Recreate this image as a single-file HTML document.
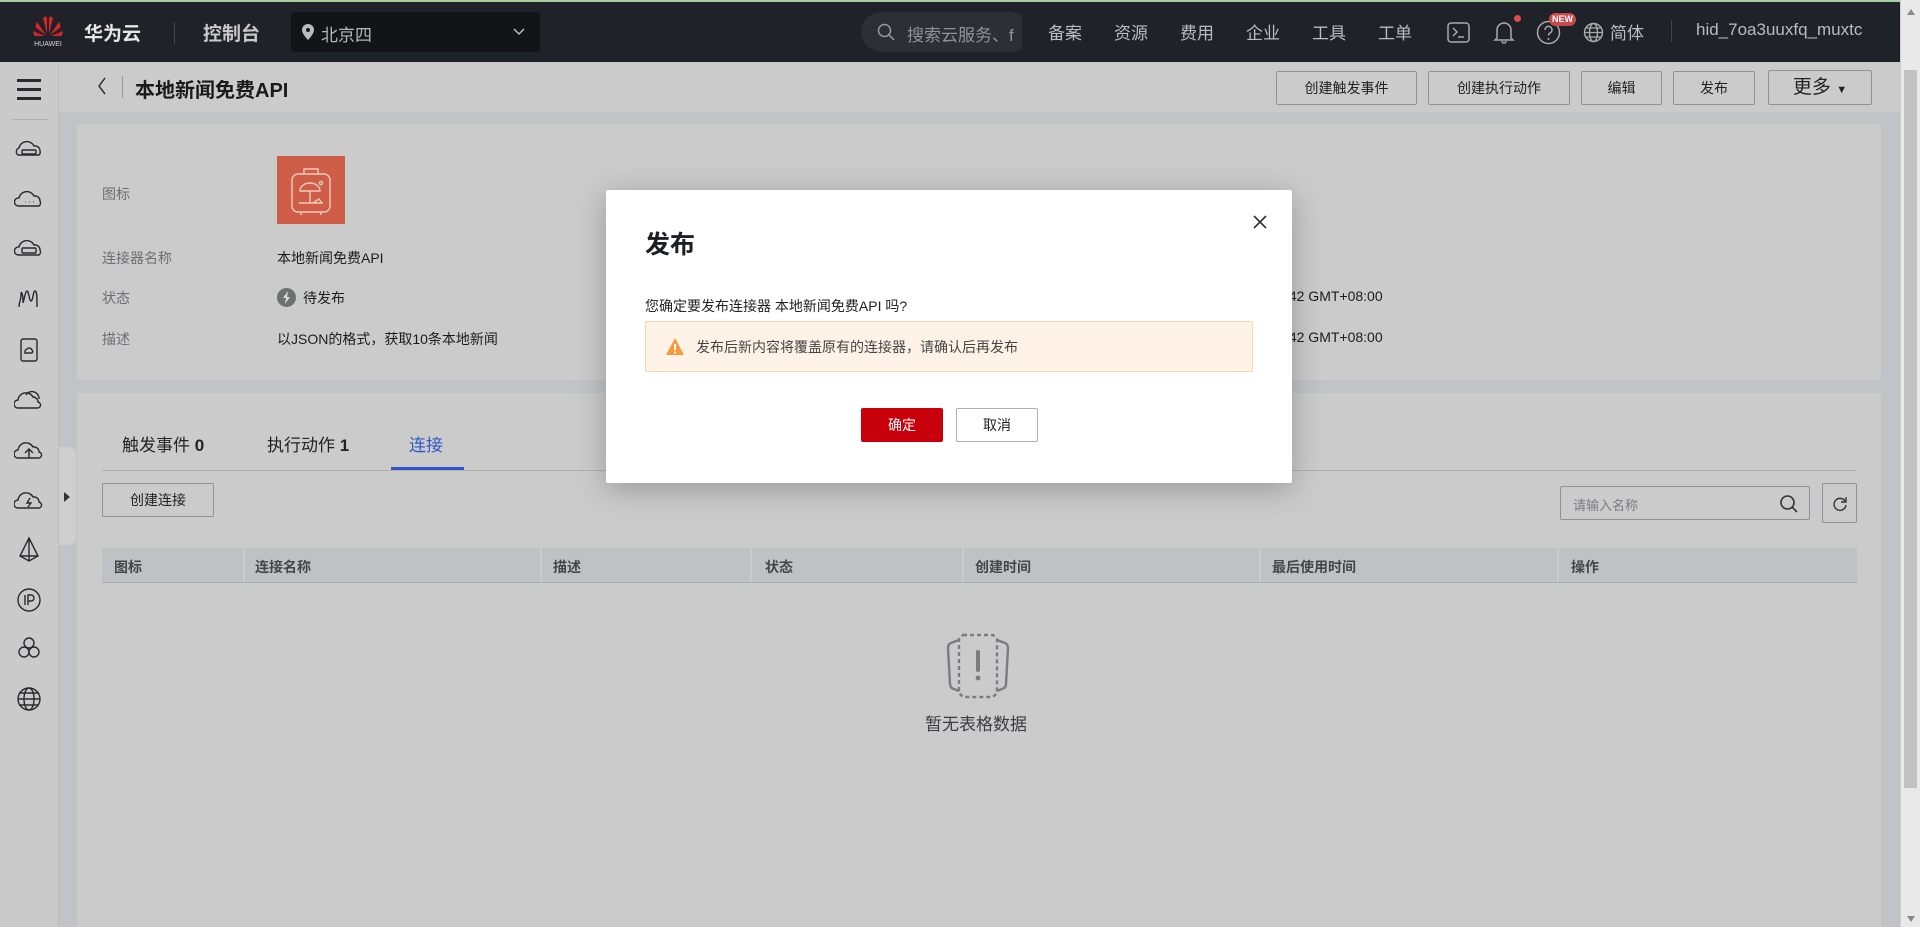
<!DOCTYPE html>
<html><head><meta charset="utf-8">
<style>
*{box-sizing:border-box;margin:0;padding:0}
body{width:1920px;height:927px;overflow:hidden;background:#c2c3c6;font-family:"Liberation Sans","Noto Sans CJK SC",sans-serif;font-size:14px;color:#1c1c1c;position:relative}
.abs{position:absolute}
.top{left:0;top:0;width:1900px;height:62px;background:#1f2229;border-top:2px solid #a9cf9f}
.nav{color:#b9bcc2;font-size:17px;top:17px}
.sb{left:1900px;top:0;width:20px;height:927px;background:#e9e9e9;border-left:1px solid #cfcfcf}
.side{left:0;top:62px;width:59px;height:865px;background:#cacaca;border-right:1px solid #bdbdbd}
.sub{left:59px;top:62px;width:1841px;height:50px;background:#cbcbcb}
.btn{border:1px solid #8f9196;border-radius:2px;background:#cbcbcb;text-align:center;font-size:14px;color:#222}
.card{background:#cbcbcb}
.lbl{color:#6d6e72;font-size:14px}
.th{top:548px;height:35px;background:#c0c1c5;border-bottom:1px solid #aeafb3}
.th span{position:absolute;top:9px;font-weight:bold;color:#44464c;font-size:14px}
.modal{left:606px;top:190px;width:686px;height:293px;background:#fff;border-radius:2px;box-shadow:0 6px 30px rgba(0,0,0,.25)}
</style></head><body>

<div class="abs top">
  <svg class="abs" style="left:30px;top:10px" width="36" height="36" viewBox="0 0 36 36">
    <g fill="#d5242b">
      <path d="M17 22 L13 6 Q16 3 17 6Z"/><path d="M19 22 L23 6 Q20 3 19 6Z"/>
      <path d="M16 23 L7 10 Q5 13 6 16Z"/><path d="M20 23 L29 10 Q31 13 30 16Z"/>
      <path d="M15 24 L3 19 Q3 22 5 24Z"/><path d="M21 24 L33 19 Q33 22 31 24Z"/>
    </g>
    <text x="18" y="34" font-size="7" fill="#d8d8d8" text-anchor="middle" font-family="Liberation Sans">HUAWEI</text>
  </svg>
  <div class="abs" style="left:84px;top:17px;color:#e6e6e6;font-size:19px;font-weight:bold">华为云</div>
  <div class="abs" style="left:174px;top:20px;width:1px;height:22px;background:#444"></div>
  <div class="abs" style="left:203px;top:17px;color:#c9c9c9;font-size:19px;font-weight:bold">控制台</div>
  <div class="abs" style="left:291px;top:10px;width:249px;height:40px;background:#131416;border-radius:4px">
    <svg class="abs" style="left:10px;top:11px" width="14" height="18" viewBox="0 0 14 18"><path d="M7 1a6 6 0 0 0-6 6c0 4 6 10 6 10s6-6 6-10a6 6 0 0 0-6-6z" fill="#bbb"/><circle cx="7" cy="7" r="2" fill="#131416"/></svg>
    <span class="abs" style="left:30px;top:9px;color:#b7b7b7;font-size:17px">北京四</span>
    <svg class="abs" style="left:222px;top:16px" width="12" height="8"><path d="M1 1l5 5 5-5" stroke="#bbb" stroke-width="1.5" fill="none"/></svg>
  </div>
  <div class="abs" style="left:861px;top:10px;width:170px;height:40px;background:#2c2f36;border-radius:20px">
    <svg class="abs" style="left:16px;top:11px" width="18" height="18"><circle cx="7.5" cy="7.5" r="6" stroke="#999" stroke-width="1.5" fill="none"/><path d="M12 12l5 5" stroke="#999" stroke-width="1.5"/></svg>
    <span class="abs" style="left:46px;top:9px;color:#8f9297;font-size:17px;white-space:nowrap">搜索云服务、f</span>
  </div>
  <div class="abs" style="left:1022px;top:10px;width:30px;height:40px;background:#1f2229"></div>
  <span class="abs nav" style="left:1048px">备案</span>
  <span class="abs nav" style="left:1114px">资源</span>
  <span class="abs nav" style="left:1180px">费用</span>
  <span class="abs nav" style="left:1246px">企业</span>
  <span class="abs nav" style="left:1312px">工具</span>
  <span class="abs nav" style="left:1378px">工单</span>
  <svg class="abs" style="left:1447px;top:20px" width="23" height="21"><rect x="1" y="1" width="21" height="19" rx="3" stroke="#aaa" stroke-width="1.5" fill="none"/><path d="M6 6l4 4-4 4M11 15h6" stroke="#aaa" stroke-width="1.5" fill="none"/></svg>
  <svg class="abs" style="left:1493px;top:18px" width="22" height="24"><path d="M4 18V10a7 7 0 0 1 14 0v8l2 2H2z" stroke="#aaa" stroke-width="1.5" fill="none"/><path d="M9 21a2 2 0 0 0 4 0" stroke="#aaa" stroke-width="1.5" fill="none"/></svg>
  <div class="abs" style="left:1514px;top:13px;width:7px;height:7px;border-radius:50%;background:#e0494a"></div>
  <svg class="abs" style="left:1536px;top:18px" width="25" height="25"><circle cx="12.5" cy="12.5" r="11" stroke="#aaa" stroke-width="1.5" fill="none"/><path d="M9 10a3.5 3.5 0 1 1 5 3c-1 .6-1.5 1.2-1.5 2.5" stroke="#aaa" stroke-width="1.5" fill="none"/><circle cx="12.5" cy="19" r="1" fill="#aaa"/></svg>
  <div class="abs" style="left:1549px;top:11px;width:27px;height:13px;border-radius:7px;background:#c9484a;color:#fff;font-size:9px;font-weight:bold;text-align:center;line-height:13px">NEW</div>
  <svg class="abs" style="left:1583px;top:20px" width="21" height="21"><circle cx="10.5" cy="10.5" r="9" stroke="#aaa" stroke-width="1.4" fill="none"/><ellipse cx="10.5" cy="10.5" rx="4" ry="9" stroke="#aaa" stroke-width="1.4" fill="none"/><path d="M1.5 10.5h18M3 6h15M3 15h15" stroke="#aaa" stroke-width="1.2"/></svg>
  <span class="abs nav" style="left:1610px">简体</span>
  <div class="abs" style="left:1671px;top:18px;width:1px;height:22px;background:#444"></div>
  <span class="abs nav" style="left:1696px;font-size:17px;top:18px">hid_7oa3uuxfq_muxtc</span>
</div>

<div class="abs sb">
  <svg class="abs" style="left:5px;top:8px" width="10" height="8"><path d="M5 1l4 6H1z" fill="#8a8a8a"/></svg>
  <div class="abs" style="left:3px;top:70px;width:13px;height:718px;background:#c1c1c1"></div>
  <svg class="abs" style="left:5px;top:915px" width="10" height="8"><path d="M5 7l4-6H1z" fill="#8a8a8a"/></svg>
</div>

<div class="abs side">
  <div class="abs" style="left:17px;top:17px;width:24px;height:3px;background:#2a2a2e;box-shadow:0 9px 0 #2a2a2e,0 18px 0 #2a2a2e"></div>
  <div class="abs" style="left:12px;top:57px;width:36px;height:1px;background:#b0b0b0"></div>
  <svg class="abs" style="left:14px;top:70px" width="30" height="650" viewBox="0 0 30 650" fill="none" stroke="#2a2a2e" stroke-width="1.4">
    <g transform="translate(0,4)"><path d="M4 19a4 4 0 0 1 1-7 8 8 0 0 1 15-2 5 5 0 0 1 6 5 4 4 0 0 1-1 4z"/><rect x="8" y="14" width="14" height="4" rx="1"/></g>
    <g transform="translate(0,54)"><path d="M4 20a4 4 0 0 1 1-8 8 8 0 0 1 15-2 5 5 0 0 1 6 5 4 4 0 0 1-1 5z"/><path d="M11 16h.5M15 16h.5M19 16h.5"/></g>
    <g transform="translate(0,103)"><path d="M4 20a4 4 0 0 1 1-8 8 8 0 0 1 15-2 5 5 0 0 1 6 5 4 4 0 0 1-1 5z"/><rect x="8" y="13" width="14" height="5" rx="1"/></g>
    <g transform="translate(0,153)"><path d="M5 22c0-6 2-6 2-12s2 0 2 6 2-10 4-10 2 10 4 10 2-10 4-10 2 6 2 16"/></g>
    <g transform="translate(0,203)"><rect x="7" y="4" width="16" height="22" rx="2"/><path d="M11 17a3 3 0 0 1 2-3 3 3 0 0 1 5 1 2 2 0 0 1 0 3h-7z"/></g>
    <g transform="translate(0,254)"><path d="M4 22a4 4 0 0 1 0-8 8 8 0 0 1 15-3 5 5 0 0 1 5 5 3 3 0 0 1-1 6z"/><path d="M12 9a7 7 0 0 1 13 4"/></g>
    <g transform="translate(0,304)"><path d="M4 22a4 4 0 0 1 0-8 8 8 0 0 1 15-3 5 5 0 0 1 6 5 3 3 0 0 1-1 6z"/><path d="M15 22v-8M11 17l4-4 4 4"/></g>
    <g transform="translate(0,354)"><path d="M4 22a4 4 0 0 1 0-8 8 8 0 0 1 15-3 5 5 0 0 1 6 5 3 3 0 0 1-1 6z"/><path d="M16 12l-3 5h4l-3 4"/></g>
    <g transform="translate(0,403)"><path d="M15 3L6 21l9 5 9-5zM15 3v23M6 21h18"/></g>
    <g transform="translate(0,453)"><circle cx="15" cy="15" r="11"/><path d="M11 10v10M14 20V10h3a3 3 0 0 1 0 6h-3"/></g>
    <g transform="translate(0,502)"><circle cx="15" cy="9" r="5"/><circle cx="10" cy="18" r="5"/><circle cx="20" cy="18" r="5"/></g>
    <g transform="translate(0,552)"><circle cx="15" cy="15" r="11"/><ellipse cx="15" cy="15" rx="5" ry="11"/><path d="M4 15h22M5 9h20M5 21h20"/></g>
  </svg>
</div>
<div class="abs" style="left:59px;top:447px;width:17px;height:98px;background:#cfcfcf;border-radius:0 8px 8px 0"></div>
<svg class="abs" style="left:63px;top:492px" width="8" height="10"><path d="M1 0l6 5-6 5z" fill="#333"/></svg>

<div class="abs sub">
  <svg class="abs" style="left:38px;top:15px" width="10" height="18"><path d="M8 1L2 9l6 8" stroke="#333" stroke-width="1.5" fill="none"/></svg>
  <div class="abs" style="left:63px;top:14px;width:1px;height:22px;background:#999"></div>
  <span class="abs" style="left:76px;top:12px;font-size:20px;font-weight:bold;color:#1a1a1a">本地新闻免费API</span>
  <div class="abs btn" style="left:1217px;top:9px;width:141px;height:34px;line-height:32px">创建触发事件</div>
  <div class="abs btn" style="left:1369px;top:9px;width:142px;height:34px;line-height:32px">创建执行动作</div>
  <div class="abs btn" style="left:1522px;top:9px;width:81px;height:34px;line-height:32px">编辑</div>
  <div class="abs btn" style="left:1614px;top:9px;width:82px;height:34px;line-height:32px">发布</div>
  <div class="abs btn" style="left:1709px;top:8px;width:104px;height:35px;line-height:33px;font-size:19px">更多 <span style="font-size:11px">▼</span></div>
</div>

<div class="abs card" style="left:77px;top:124px;width:1804px;height:256px">
  <span class="abs lbl" style="left:25px;top:60px">图标</span>
  <div class="abs" style="left:200px;top:32px;width:68px;height:68px;background:#cf5e49">
    <svg width="68" height="68" viewBox="0 0 68 68" fill="none" stroke="#f3c9bd" stroke-width="1.4"><rect x="15" y="18" width="38" height="38" rx="6"/><path d="M27 18v-5h14v5M24 56v3M44 56v3"/><path d="M23 35a10 8 0 0 1 20 0z"/><path d="M33 35v12M22 47h24M36 47l6-4 3 4"/><circle cx="44" cy="27" r="1.6"/></svg>
  </div>
  <span class="abs lbl" style="left:25px;top:124px">连接器名称</span>
  <span class="abs" style="left:200px;top:124px">本地新闻免费API</span>
  <span class="abs lbl" style="left:25px;top:164px">状态</span>
  <div class="abs" style="left:200px;top:164px;width:19px;height:19px;border-radius:50%;background:#6f7074"></div>
  <svg class="abs" style="left:204px;top:167px" width="11" height="13"><path d="M7 0L2 7h3l-1 6 5-7H6z" fill="#ddd"/></svg>
  <span class="abs" style="left:226px;top:164px">待发布</span>
  <span class="abs lbl" style="left:25px;top:205px">描述</span>
  <span class="abs" style="left:200px;top:205px">以JSON的格式，获取10条本地新闻</span>
  <span class="abs" style="left:1100px;top:164px">2023/11/20 16:32:42 GMT+08:00</span>
  <span class="abs" style="left:1100px;top:205px">2023/11/20 16:32:42 GMT+08:00</span>
</div>

<div class="abs card" style="left:77px;top:393px;width:1804px;height:534px">
  <span class="abs" style="left:45px;top:38px;font-size:17px;color:#222">触发事件 <b>0</b></span>
  <span class="abs" style="left:190px;top:38px;font-size:17px;color:#222">执行动作 <b>1</b></span>
  <span class="abs" style="left:332px;top:38px;font-size:17px;color:#3158c9">连接</span>
  <div class="abs" style="left:25px;top:77px;width:1755px;height:1px;background:#b0b1b4"></div>
  <div class="abs" style="left:314px;top:74px;width:73px;height:3px;background:#2f56c8"></div>
  <div class="abs btn" style="left:25px;top:90px;width:112px;height:34px;line-height:32px">创建连接</div>
  <div class="abs" style="left:1483px;top:93px;width:250px;height:34px;border:1px solid #8f9196;border-radius:2px">
    <span class="abs" style="left:12px;top:8px;color:#7b7c80;font-size:13px">请输入名称</span>
    <svg class="abs" style="left:218px;top:7px" width="20" height="20"><circle cx="8.5" cy="8.5" r="6.5" stroke="#333" stroke-width="1.6" fill="none"/><path d="M13 13l5 5" stroke="#333" stroke-width="1.6"/></svg>
  </div>
  <div class="abs" style="left:1745px;top:90px;width:35px;height:40px;border:1px solid #8f9196;border-radius:2px">
    <svg class="abs" style="left:9px;top:12px" width="16" height="16"><path d="M13 5a6 6 0 1 0 1 4" stroke="#333" stroke-width="1.4" fill="none"/><path d="M14 1v5h-5" stroke="#333" stroke-width="1.4" fill="none"/></svg>
  </div>
</div>
<div class="abs th" style="left:102px;width:1755px">
  <span style="left:12px">图标</span>
  <span style="left:153px">连接名称</span>
  <span style="left:451px">描述</span>
  <span style="left:663px">状态</span>
  <span style="left:873px">创建时间</span>
  <span style="left:1170px">最后使用时间</span>
  <span style="left:1469px">操作</span>
  <i class="abs" style="left:141px;top:0;width:2px;height:34px;background:#cbcbcb"></i>
  <i class="abs" style="left:438px;top:0;width:2px;height:34px;background:#cbcbcb"></i>
  <i class="abs" style="left:648px;top:0;width:2px;height:34px;background:#cbcbcb"></i>
  <i class="abs" style="left:860px;top:0;width:2px;height:34px;background:#cbcbcb"></i>
  <i class="abs" style="left:1157px;top:0;width:2px;height:34px;background:#cbcbcb"></i>
  <i class="abs" style="left:1455px;top:0;width:2px;height:34px;background:#cbcbcb"></i>
</div>
<svg class="abs" style="left:945px;top:632px" width="66" height="68" viewBox="0 0 66 68" fill="none" stroke="#7b7c80" stroke-width="2.4">
  <path d="M14 8 L6 11 Q3 12 3 16 L5 52 Q5 56 9 57 L14 59"/>
  <path d="M52 8 L60 11 Q63 12 63 16 L61 52 Q61 56 57 57 L52 59"/>
  <path d="M18 3h30l4 4v54l-4 4H18l-4-4V7z" stroke-dasharray="4 3"/>
  <path d="M33 20v18" stroke-width="4" stroke-linecap="round"/><circle cx="33" cy="46" r="2.4" fill="#7b7c80" stroke="none"/>
</svg>
<span class="abs" style="left:925px;top:710px;font-size:17px;color:#3c3d40">暂无表格数据</span>

<div class="abs modal">
  <span class="abs" style="left:39px;top:35px;font-size:25px;font-weight:bold;color:#1e1f24">发布</span>
  <svg class="abs" style="left:647px;top:25px" width="14" height="14"><path d="M1 1l12 12M13 1L1 13" stroke="#333" stroke-width="1.6"/></svg>
  <span class="abs" style="left:39px;top:106px;font-size:14px;color:#222">您确定要发布连接器 本地新闻免费API 吗?</span>
  <div class="abs" style="left:39px;top:131px;width:608px;height:51px;background:#fff2e7;border:1px solid #fdd5ab;border-radius:2px">
    <svg class="abs" style="left:19px;top:15px" width="20" height="19"><path d="M10 1L19 18H1z" fill="#f79a3c"/><path d="M10 7v6" stroke="#fff" stroke-width="2"/><circle cx="10" cy="15.5" r="1.1" fill="#fff"/></svg>
    <span class="abs" style="left:50px;top:15px;font-size:14px;color:#444">发布后新内容将覆盖原有的连接器，请确认后再发布</span>
  </div>
  <div class="abs" style="left:255px;top:218px;width:82px;height:34px;background:#c7000b;border-radius:2px;color:#fff;text-align:center;line-height:34px;font-size:14px">确定</div>
  <div class="abs" style="left:350px;top:218px;width:82px;height:34px;border:1px solid #adb0b8;border-radius:2px;color:#222;text-align:center;line-height:32px;font-size:14px">取消</div>
</div>
</body></html>
